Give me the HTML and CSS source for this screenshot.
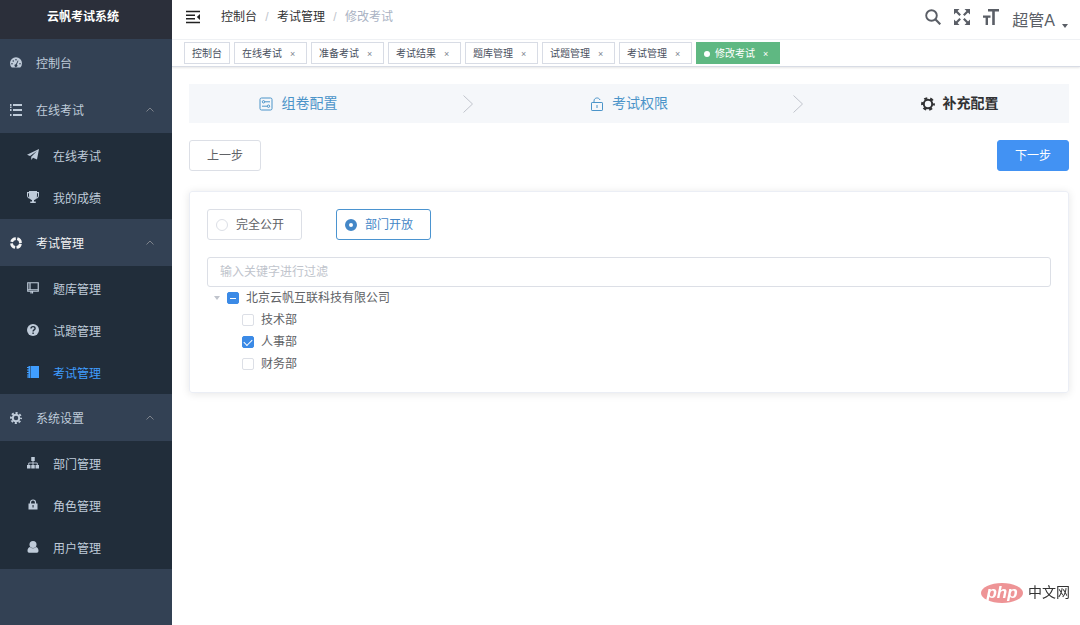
FILE: index.html
```html
<!DOCTYPE html>
<html lang="zh-CN">
<head>
<meta charset="utf-8">
<meta name="viewport" content="width=device-width, initial-scale=1">
<title>云帆考试系统</title>
<link rel="stylesheet" href="styles.css">
</head>
<body>
<div class="app">
  <aside class="sidebar">
    <h1 class="logo">云帆考试系统</h1>
    <nav class="menu" aria-label="主菜单">
      <a class="menu-title" href="#">
        <svg class="icon" viewBox="0 0 24 24"><path fill="currentColor" fill-rule="evenodd" d="M3.500 21A12 12 0 1 1 20.500 21ZM12 4a1.600 1.600 0 1 0 0 3.200a1.600 1.600 0 0 0 0-3.200ZM6.500 6.500a1.600 1.600 0 1 0 0 3.200a1.600 1.600 0 0 0 0-3.200ZM4 12a1.600 1.600 0 1 0 0 3.200A1.600 1.600 0 0 0 4 12ZM20 12a1.600 1.600 0 1 0 0 3.200a1.600 1.600 0 0 0 0-3.200ZM15.500 7l-3.800 7.500a2.800 2.800 0 1 0 2 .7L17 7.700Z"/></svg>
        <span>控制台</span>
      </a>

      <button class="menu-title" type="button" aria-expanded="true">
        <svg class="icon" viewBox="0 0 24 24" fill="currentColor"><path d="M6 0h18v4H6zM6 10h18v4H6zM6 20h18v4H6zM0 0h3v4H0zM0 5h3v3H0zM0 10h3v4H0zM0 20h3v4H0z"/></svg>
        <span>在线考试</span>
        <svg class="arrow" viewBox="0 0 8 5"><path d="M.5 4.500 4 1l3.500 3.500" fill="none" stroke="currentColor" stroke-width=".8"/></svg>
      </button>
      <div class="submenu">
        <a href="#"><svg class="icon" viewBox="0 0 24 24" fill="currentColor"><path d="M24 0 20 21l-8-3.500L8.500 22v-6.500L20 4 6 14 0 11.500Z"/></svg><span>在线考试</span></a>
        <a href="#"><svg class="icon" viewBox="0 0 24 24" fill="currentColor"><path fill-rule="evenodd" d="M4 0h16v2h4v7c0 4-3 6-6 6.500-1 1.600-2.500 2.300-4 2.500V21h3.500v3h-11v-3H10v-3c-1.500-.2-3-.9-4-2.500C3 15 0 13 0 9V2h4ZM2 4.500V9c0 2 1 3.300 2.500 4C4 11 4 8 4 4.500Zm20 0h-2c0 3.500 0 6.500-.5 8.500C21 12.300 22 11 22 9Z"/></svg><span>我的成绩</span></a>
      </div>

      <button class="menu-title is-current" type="button" aria-expanded="true">
        <svg class="icon" viewBox="0 0 24 24"><circle cx="12" cy="12" r="9" fill="none" stroke="currentColor" stroke-width="5.500" stroke-dasharray="11.140 3" stroke-dashoffset="-1.500"/></svg>
        <span>考试管理</span>
        <svg class="arrow" viewBox="0 0 8 5"><path d="M.5 4.500 4 1l3.500 3.500" fill="none" stroke="currentColor" stroke-width=".8"/></svg>
      </button>
      <div class="submenu">
        <a href="#"><svg class="icon" viewBox="0 0 24 24"><path fill="none" stroke="currentColor" stroke-width="2.400" d="M1.500 1.500h21v17h-21zM6 2v13M2 15.500h20M8 19v4M11 19v4"/></svg><span>题库管理</span></a>
        <a href="#"><svg class="icon" viewBox="0 0 24 24"><circle cx="12" cy="12" r="12" fill="currentColor"/><path d="M8 9.200c0-5.400 8.200-5 8.200-.4 0 2.900-4 3-4 6M12.200 17v3" fill="none" stroke="#212d3a" stroke-width="2.800"/></svg><span>试题管理</span></a>
        <a class="is-active" href="#" aria-current="page"><svg class="icon" viewBox="0 0 24 24" fill="currentColor"><path d="M7 0h17v24H7zM3 0h3v24H3zM0 2h4v2H0zM0 7h4v2H0zM0 12h4v2H0zM0 17h4v2H0zM0 21h4v2H0z"/></svg><span>考试管理</span></a>
      </div>

      <button class="menu-title" type="button" aria-expanded="true">
        <svg class="icon" viewBox="0 0 24 24"><circle cx="12" cy="12" r="6.500" fill="none" stroke="currentColor" stroke-width="4"/><circle cx="12" cy="12" r="10" fill="none" stroke="currentColor" stroke-width="4" stroke-dasharray="4.200 3.654" stroke-dashoffset="2.100"/></svg>
        <span>系统设置</span>
        <svg class="arrow" viewBox="0 0 8 5"><path d="M.5 4.500 4 1l3.500 3.500" fill="none" stroke="currentColor" stroke-width=".8"/></svg>
      </button>
      <div class="submenu">
        <a href="#"><svg class="icon" viewBox="0 0 24 24"><path fill="currentColor" d="M8.500 0h7v8h-7zM0 16h7v7H0zM8.500 16h7v7h-7zM17 16h7v7h-7z"/><path fill="none" stroke="currentColor" stroke-width="1.800" d="M12 7v10M3.500 17v-5h17v5"/></svg><span>部门管理</span></a>
        <a href="#"><svg class="icon" viewBox="0 0 24 24"><path d="M7 11V7a5 5 0 0 1 10 0v4" fill="none" stroke="currentColor" stroke-width="2.400"/><path fill="currentColor" fill-rule="evenodd" d="M3 9h18v12H3zM11 12v5h2.200v-5Z"/></svg><span>角色管理</span></a>
        <a href="#"><svg class="icon" viewBox="0 0 24 24" fill="currentColor"><circle cx="12" cy="7" r="7"/><path d="M6 12c3 3.500 9 3.500 12 0 3.500 1 5 4 5 7.500 0 2-1.300 4-3 4H4c-1.700 0-3-2-3-4C1 16 2.500 13 6 12Z"/></svg><span>用户管理</span></a>
      </div>
    </nav>
  </aside>

  <div class="main">
    <header class="navbar">
      <button class="icon-button" type="button" aria-label="收起菜单">
        <svg class="fold" viewBox="0 0 14 14"><path d="M0 1.500h14M0 5.200h9M0 8.800h9M0 12.500h14" fill="none" stroke="#222" stroke-width="1.500"/><path d="M14 4v6l-3.200-3z" fill="#222"/></svg>
      </button>
      <nav class="breadcrumb" aria-label="面包屑">
        <a href="#">控制台</a><span class="slash">/</span><a href="#">考试管理</a><span class="slash">/</span><span class="here">修改考试</span>
      </nav>
      <div class="tools">
        <button class="icon-button" type="button" aria-label="搜索"><svg class="tool" viewBox="0 0 16 16"><circle cx="6.500" cy="6.500" r="5.300" fill="none" stroke="currentColor" stroke-width="1.900"/><path d="m10.300 10.300 5 5" stroke="currentColor" stroke-width="2.200"/></svg></button>
        <button class="icon-button" type="button" aria-label="全屏"><svg class="tool" viewBox="0 0 16 16"><path fill="currentColor" d="M0 0h5.500L0 5.500zM16 0v5.500L10.500 0zM0 16v-5.500L5.500 16zM16 16h-5.500l5.500-5.500z"/><path stroke="currentColor" stroke-width="2.200" d="m2 2 4.200 4.200M14 2 9.800 6.200M2 14l4.200-4.200M14 14 9.800 9.800"/></svg></button>
        <button class="icon-button" type="button" aria-label="字号"><svg class="tool" viewBox="0 0 16 16"><path fill="currentColor" d="M5 0h11v2.600h-4.200V16H9.200V2.600H5zM0 6.500h7.500v2.300H5V16H2.600V8.800H0z"/></svg></button>
        <button class="user" type="button">超管A<svg class="caret" viewBox="0 0 6 4"><path d="M0 0h6L3 4z" fill="currentColor"/></svg></button>
      </div>
    </header>

    <nav class="tags" aria-label="已打开页面">
      <div class="tag tag-home"><a href="#">控制台</a></div>
      <div class="tag"><a href="#">在线考试</a><button type="button" aria-label="关闭在线考试">×</button></div>
      <div class="tag"><a href="#">准备考试</a><button type="button" aria-label="关闭准备考试">×</button></div>
      <div class="tag"><a href="#">考试结果</a><button type="button" aria-label="关闭考试结果">×</button></div>
      <div class="tag"><a href="#">题库管理</a><button type="button" aria-label="关闭题库管理">×</button></div>
      <div class="tag"><a href="#">试题管理</a><button type="button" aria-label="关闭试题管理">×</button></div>
      <div class="tag"><a href="#">考试管理</a><button type="button" aria-label="关闭考试管理">×</button></div>
      <div class="tag tag-active"><a href="#">修改考试</a><button type="button" aria-label="关闭修改考试">×</button></div>
    </nav>

    <main class="content">
      <ol class="steps">
        <li class="step">
          <svg class="step-icon" viewBox="0 0 14 14" fill="none" stroke="currentColor"><rect x="1" y="1" width="12" height="12" rx="1.500"/><circle cx="4.500" cy="4.800" r="1.200"/><path d="M5.700 4.800H11M3 9.200h5.300"/><circle cx="9.500" cy="9.200" r="1.200"/></svg>
          <span>组卷配置</span>
          <svg class="step-arrow" viewBox="0 0 10 18"><path d="m.5.5 9 8.500-9 8.500" fill="none" stroke="#c0c4cc"/></svg>
        </li>
        <li class="step">
          <svg class="step-icon" viewBox="0 0 14 14" fill="none" stroke="currentColor"><rect x="1.500" y="5.500" width="11" height="8" rx=".6"/><path d="M4 5.500V4c0-3.700 5-4 6-1M7 8v3"/></svg>
          <span>考试权限</span>
          <svg class="step-arrow" viewBox="0 0 10 18"><path d="m.5.5 9 8.500-9 8.500" fill="none" stroke="#c0c4cc"/></svg>
        </li>
        <li class="step step-current" aria-current="step">
          <svg class="step-icon" viewBox="0 0 14 14" fill="none" stroke="currentColor"><circle cx="7" cy="7" r="4.200" stroke-width="2"/><circle cx="7" cy="7" r="5.800" stroke-width="2.200" stroke-dasharray="3.074 3" stroke-dashoffset="1.500"/></svg>
          <span>补充配置</span>
        </li>
      </ol>

      <div class="actions">
        <button class="button" type="button">上一步</button>
        <button class="button button-primary" type="button">下一步</button>
      </div>

      <section class="card">
        <div class="radios" role="radiogroup" aria-label="开放范围">
          <label class="radio"><input type="radio" name="open"><span>完全公开</span></label>
          <label class="radio"><input type="radio" name="open" checked><span>部门开放</span></label>
        </div>
        <input class="filter" type="text" placeholder="输入关键字进行过滤" aria-label="输入关键字进行过滤">
        <ul class="tree">
          <li>
            <div class="node">
              <button class="toggle" type="button" aria-label="收起"><svg viewBox="0 0 6 4"><path d="M0 0h6L3 4z" fill="#c0c4cc"/></svg></button>
              <label><input class="check is-partial" type="checkbox"><span>北京云帆互联科技有限公司</span></label>
            </div>
            <ul class="children">
              <li class="node"><label><input class="check" type="checkbox"><span>技术部</span></label></li>
              <li class="node"><label><input class="check" type="checkbox" checked><span>人事部</span></label></li>
              <li class="node"><label><input class="check" type="checkbox"><span>财务部</span></label></li>
            </ul>
          </li>
        </ul>
      </section>
    </main>
  </div>

  <div class="brand"><span class="brand-badge">php</span><span>中文网</span></div>
</div>
</body>
</html>
```
FILE: styles.css
```css
* { box-sizing: border-box; }

body {
  margin: 0;
  color: #606266;
  background: #fff;
  font: 12px/18px "Liberation Sans", "Noto Sans CJK SC", sans-serif;
}

a { color: inherit; text-decoration: none; }

button {
  padding: 0;
  border: 0;
  background: none;
  color: inherit;
  font: inherit;
  cursor: pointer;
}

ul, ol { margin: 0; padding: 0; list-style: none; }
svg { display: block; flex: none; }

.app { display: flex; min-height: 100vh; }

/* Sidebar */
.sidebar { flex: none; width: 172px; background: #334154; color: #bfcbd9; }

.logo {
  display: flex;
  align-items: center;
  justify-content: center;
  height: 39px;
  margin: 0;
  padding: 0 6px 6px 0;
  background: #2b2f3a;
  color: #fff;
  font-size: 12px;
}

.menu-title, .submenu a { display: flex; align-items: center; width: 100%; }
.menu-title { gap: 14px; height: 47px; padding: 3px 18px 0 10px; }
.menu-title.is-current { color: #f4f4f5; }
.icon { width: 12px; height: 12px; margin-bottom: 3px; }
.arrow { width: 8px; height: 5px; margin: 0 0 4px auto; color: #909399; }
.submenu { padding: 1px 0; background: #212d3a; }
.submenu a { gap: 14px; height: 42px; padding: 3px 0 0 27px; }
.submenu .is-active { color: #409eff; }

/* Top bar */
.main { flex: 1; min-width: 0; }

.navbar {
  display: flex;
  align-items: center;
  height: 40px;
  padding: 0 12px 5px 14px;
  border-bottom: 1px solid #f0f2f5;
}

.fold { width: 14px; height: 14px; }
.breadcrumb { display: flex; margin-left: 21px; color: #303133; }
.slash { width: 20px; color: #c0c4cc; text-align: center; }
.here { color: #a9b2c3; }

.tools { display: flex; align-items: center; gap: 13px; margin-left: auto; color: #5a5e66; }
.tool { width: 16px; height: 16px; }
.user { display: flex; align-items: flex-end; gap: 7px; padding-top: 7px; font-size: 16px; line-height: 20px; }
.caret { width: 6px; height: 4px; margin-bottom: 3px; }

/* Opened pages */
.tags {
  display: flex;
  gap: 4px;
  padding: 2px 12px;
  border-bottom: 1px solid #d8dce5;
  box-shadow: 0 1px 2px rgba(0, 0, 0, .1);
}

.tag {
  display: flex;
  align-items: center;
  gap: 8px;
  width: 73px;
  height: 22px;
  padding: 1px 7px 0;
  border: 1px solid #d8dce5;
  color: #495060;
  font-size: 10px;
  line-height: 16px;
}

.tag-home { width: 46px; }
.tag button { color: #80858f; font-size: 9px; }
.tag-active { width: 84px; border-color: #5fb882; background: #5fb882; color: #fff; }
.tag-active button { color: #fff; }
.tag-active::before { content: ""; width: 6px; height: 6px; margin-right: -3px; border-radius: 50%; background: #fff; }

/* Content */
.content { display: grid; gap: 17px; padding: 17px 11px 17px 17px; }

.steps { display: flex; padding: 10px 8%; background: #f5f7fa; color: #4b94c9; }
.step { display: flex; flex: 1; align-items: center; gap: 8px; font-size: 14px; line-height: 19px; }
.step-icon { width: 14px; height: 14px; }
.step-arrow { width: 10px; height: 18px; margin: 0 auto; }
.step-current { flex: none; color: #303133; font-weight: 700; }

.actions { display: flex; justify-content: space-between; }

.button {
  height: 31px;
  padding: 0 17px;
  border: 1px solid #dcdfe6;
  border-radius: 3px;
  background: #fff;
}

.button-primary { border-color: #4292f3; background: #4292f3; color: #fff; }

.card {
  display: grid;
  margin-top: 3px;
  padding: 17px;
  border: 1px solid #ebeef5;
  border-radius: 3px;
  box-shadow: 0 1px 8px rgba(0, 0, 0, .1);
}

.radios { display: flex; gap: 34px; }

.radio {
  display: flex;
  align-items: center;
  gap: 8px;
  height: 31px;
  padding: 0 17px 0 8px;
  border: 1px solid #dcdfe6;
  border-radius: 3px;
}

.radio input {
  width: 12px;
  height: 12px;
  margin: 0;
  border: 1px solid #dcdfe6;
  border-radius: 50%;
  appearance: none;
}

.radio input:checked { border: 4px solid #4487c7; }
.radio:has(input:checked) { border-color: #4b94d0; color: #4487c7; }

.filter {
  width: 100%;
  height: 30px;
  margin-top: 17px;
  padding: 0 12px;
  border: 1px solid #dcdfe6;
  border-radius: 3px;
  color: #606266;
  font: inherit;
}

.filter::placeholder { color: #c0c4cc; }

.node, .node label { display: flex; align-items: center; }
.node { height: 22px; }
.node label { gap: 7px; }
.toggle { width: 20px; padding-left: 7px; }
.toggle svg { width: 6px; height: 4px; }
.children { padding-left: 35px; }

.check {
  display: grid;
  place-content: center;
  width: 12px;
  height: 12px;
  margin: 0;
  border: 1px solid #dcdfe6;
  border-radius: 2px;
  appearance: none;
}

.check:checked, .check.is-partial { border-color: #3b8ae6; background: #3b8ae6; }
.check.is-partial::after { content: ""; width: 6px; height: 1px; background: #fff; }
.check:checked::after {
  content: "";
  width: 7px;
  height: 4px;
  margin-bottom: 2px;
  border: solid #fff;
  border-width: 0 0 1px 1px;
  transform: rotate(-45deg);
}

/* Site mark over the page corner */
.brand {
  position: fixed;
  right: 10px;
  bottom: 22px;
  display: flex;
  align-items: center;
  gap: 5px;
  color: #333;
  font-size: 14px;
  line-height: 21px;
}

.brand-badge {
  width: 42px;
  border-radius: 50%;
  background: #ee9496;
  color: #fff;
  font-size: 17px;
  font-style: italic;
  font-weight: 700;
  line-height: 20px;
  text-align: center;
}
```
